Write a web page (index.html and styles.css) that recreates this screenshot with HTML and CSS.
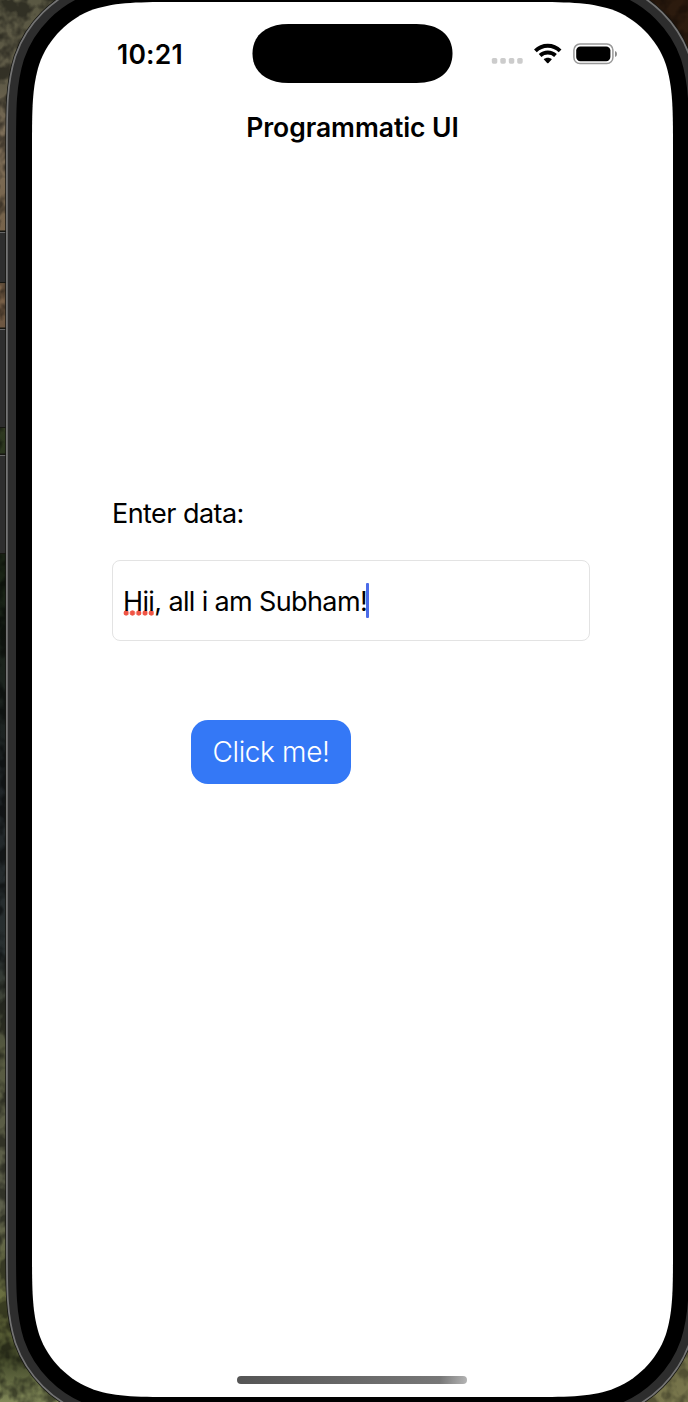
FILE: index.html
```html
<!DOCTYPE html>
<html lang="en">
<head>
<meta charset="utf-8">
<title>Programmatic UI</title>
<link rel="stylesheet" href="styles.css">
</head>
<body>
<div class="stage">
  <svg class="device" viewBox="0 0 688 1402" width="688" height="1402" aria-hidden="true">
    <defs>
      <linearGradient id="leftBg" x1="0" y1="0" x2="0" y2="1">
        <stop offset="0" stop-color="#5a5843"/><stop offset=".06" stop-color="#5f5a47"/>
        <stop offset=".1" stop-color="#80705a"/><stop offset=".15" stop-color="#76644c"/>
        <stop offset=".21" stop-color="#7a6148"/><stop offset=".24" stop-color="#68533f"/>
        <stop offset=".31" stop-color="#2d3820"/><stop offset=".42" stop-color="#182215"/>
        <stop offset=".56" stop-color="#1f2427"/><stop offset=".68" stop-color="#293031"/>
        <stop offset=".75" stop-color="#575a40"/><stop offset=".86" stop-color="#5d5f4b"/>
        <stop offset=".93" stop-color="#6b703f"/><stop offset=".97" stop-color="#424829"/>
        <stop offset="1" stop-color="#818858"/>
      </linearGradient>
      <linearGradient id="rightBg" x1="0" y1="0" x2="0" y2="1">
        <stop offset="0" stop-color="#2c1b0e"/><stop offset=".1" stop-color="#2c1d10"/>
        <stop offset=".9" stop-color="#6a6640"/><stop offset="1" stop-color="#78764c"/>
      </linearGradient>
      <filter id="foliage" x="0" y="0" width="100%" height="100%">
        <feTurbulence type="fractalNoise" baseFrequency=".07 .06" numOctaves="3" seed="8"/>
        <feColorMatrix values="0 0 0 0 0  0 0 0 0 0  0 0 0 0 0  4 0 0 0 -1.6"/>
      </filter>
      <path id="screenShape" d="M32 151.8C32 108.7 32 87.1 39.3 63.9C47.9 39 69 17.900 93.9 9.3C117.1 2 138.7 2 181.8 2H523.2C566.3 2 587.9 2 611.1 9.3C636 17.9 657.1 39 665.7 63.9C673 87.1 673 108.7 673 151.8V1247.2C673 1290.3 673 1311.9 665.7 1335.1C657.1 1360 636 1381.1 611.1 1389.7C587.9 1397 566.3 1397 523.2 1397H181.8C138.7 1397 117.1 1397 93.9 1389.7C69 1381.1 47.9 1360 39.3 1335.1C32 1311.9 32 1290.3 32 1247.2Z"/>
    </defs>
    <rect width="344" height="1402" fill="url(#leftBg)"/>
    <rect x="344" width="344" height="1402" fill="url(#rightBg)"/>
    <rect width="120" height="1402" filter="url(#foliage)" opacity=".45"/>
    <rect x="620" width="68" height="1402" filter="url(#foliage)" opacity=".3"/>
    <g fill="#2e2e2e">
      <rect y="232" width="8" height="51"/><rect y="329" width="8" height="99"/><rect y="455" width="8" height="99"/>
    </g>
    <g fill="#666">
      <rect y="232" width="6" height="1"/><rect y="329" width="6" height="1"/><rect y="455" width="6" height="1"/>
    </g>
    <g fill="#171712">
      <rect y="230.500" width="6" height="1.500"/><rect y="282" width="6" height="1"/><rect y="327.500" width="6" height="1.500"/><rect y="427" width="6" height="1"/><rect y="453.500" width="6" height="1.500"/><rect y="553" width="6" height="1"/>
    </g>
    <use href="#screenShape" fill="none" stroke="#151511" stroke-width="53.500"/>
    <use href="#screenShape" fill="none" stroke="#747474" stroke-width="52"/>
    <use href="#screenShape" fill="none" stroke="#2d2d2d" stroke-width="48.500"/>
    <use href="#screenShape" fill="none" stroke="#000" stroke-width="32"/>
    <use href="#screenShape" fill="#fff"/>
  </svg>

  <main class="screen">
    <header class="status">
      <span class="time">10:21</span>
      <svg class="island" viewBox="0 0 201 59" width="201" height="59" aria-hidden="true">
        <path d="M36.500 0H164.500C186.500 0 200.500 11 200.500 29.500S186.500 59 164.500 59H36.500C14.500 59 .5 48 .5 29.500S14.500 0 36.500 0Z"/>
      </svg>
      <svg class="indicators" viewBox="0 0 128 24" width="128" height="24" aria-hidden="true">
        <g fill="#ccc">
          <rect x=".8" y="16" width="5.500" height="5.700" rx="1.600"/><rect x="9.300" y="16" width="5.500" height="5.700" rx="1.600"/><rect x="17.800" y="16" width="5.500" height="5.700" rx="1.600"/><rect x="26.200" y="16" width="5.500" height="5.700" rx="1.600"/>
        </g>
        <g fill="none" stroke="#000" stroke-width="3.900">
          <path d="M44.400 8.900C51.300 2.100 62.200 2.100 69.100 8.900"/>
          <path d="M49.100 13.500C53.400 9.500 60.200 9.500 64.500 13.500"/>
        </g>
        <path d="M52.700 17.300C55 15.300 58.600 15.300 60.900 17.300L57.500 20.900Q56.800 21.600 56.100 20.900Z"/>
        <rect x="82.900" y="2.100" width="39" height="19.400" rx="6" fill="none" stroke="#999" stroke-width="1.500"/>
        <rect x="85.200" y="4.400" width="34.200" height="14.800" rx="4.200"/>
        <path d="M124 9Q126 9.600 126 11.900T124 15Z" fill="#8a8a8a"/>
      </svg>
    </header>
    <h1 class="title">Programmatic UI</h1>
    <section class="form">
      <div class="label">Enter data:</div>
      <div class="field">
        <span class="value"><span class="misspelled">Hii</span>, all i am Subham!</span><i class="caret"></i>
      </div>
      <button class="action">Click me!</button>
    </section>
    <div class="home"></div>
  </main>
</div>
</body>
</html>
```
FILE: styles.css
```css
* { box-sizing: border-box; }
body { margin: 0; overflow: hidden; font-family: Inter, "Liberation Sans", sans-serif; color: #000; }
.stage { position: relative; width: 688px; height: 1402px; overflow: hidden; }
.device { position: absolute; inset: 0; display: block; }
.screen {
  position: relative;
  display: flex;
  flex-direction: column;
  width: 641px;
  height: 1395px;
  margin: 2px 0 0 32px;
}
.status { display: flex; align-items: flex-start; padding: 22px 0 0 85px; height: 81px; }
.time { width: 135px; padding-top: 14px; font-size: 26.5px; line-height: 32px; font-weight: 600; letter-spacing: .2px; white-space: nowrap; }
.island { flex: none; display: block; }
.indicators { flex: none; display: block; margin: 18px 0 0 38px; }
.title { margin: 28px 0 0; text-align: center; font-size: 26.5px; line-height: 32px; font-weight: 600; letter-spacing: -.05px; }
.form { display: flex; flex-direction: column; align-items: flex-start; padding: 355px 0 0 80px; }
.label { font-size: 27px; line-height: 32px; letter-spacing: -.55px; white-space: nowrap; }
.field {
  display: flex;
  align-items: center;
  width: 478px;
  height: 81px;
  margin-top: 30px;
  padding: 1px 0 0 10px;
  border: 1px solid #e3e3e3;
  border-radius: 8px;
  font-size: 27px;
  white-space: nowrap;
}
.value { letter-spacing: -.63px; }
.misspelled {
  background: radial-gradient(circle at center, #f05545 2.3px, transparent 2.9px) 0 calc(100% - 2px) / 6.3px 6px repeat-x;
}
.caret { width: 3px; height: 35px; margin: -1px 0 0 -1px; border-radius: 1px; background: #4b6be8; }
.action {
  width: 160px;
  height: 64px;
  margin: 79px 0 0 79px;
  padding: 1px 0 0;
  border: 0;
  border-radius: 17px;
  background: #3478f6;
  color: #fff;
  font: 340 28px/63px Inter, "Liberation Sans", sans-serif;
  letter-spacing: -.35px;
  white-space: nowrap;
}
.home {
  width: 230px;
  height: 8px;
  margin: auto auto 13px 205.400px;
  border-radius: 4px;
  background: linear-gradient(100deg, #555 0, #707070 70%, #777 88%, #b5b5b5 100%);
}
```
